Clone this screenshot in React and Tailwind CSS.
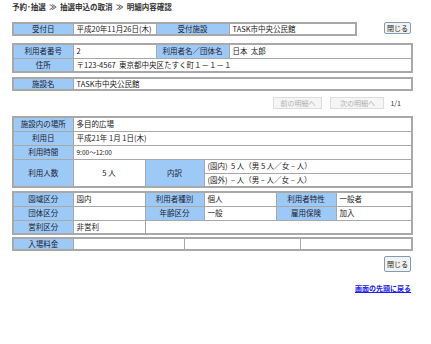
import React from "react";

const L = "bg-[#9cc9f5] text-center text-[#223] border border-[#a8a8a8] px-[2px] whitespace-nowrap overflow-hidden";
const V = "bg-white border border-[#a8a8a8] px-[3px] whitespace-nowrap overflow-hidden";
const TBL = "border-collapse table-fixed border-2 border-[#a8a8a8]";
const R = "h-[14px]";
const R1 = "h-[12px]";

function Cols({ widths }) {
  return (
    <colgroup>
      {widths.map((w, i) => (
        <col key={i} style={{ width: w }} />
      ))}
    </colgroup>
  );
}

export default function App() {
  return (
    <div
      className="w-[431px] h-[344px] bg-white text-[#222] text-[7.5px] leading-[10px] pl-[12px] flex flex-col"
      style={{ fontFamily: '"Noto Sans CJK JP", "Noto Sans", sans-serif' }}
    >
      <div className="mt-[2px] h-[10px] font-bold text-[7.5px] text-[#333]">
        予約･抽選 &nbsp;≫&nbsp; 抽選申込の取消 &nbsp;≫&nbsp; 明細内容確認
      </div>

      <div className="mt-[10px] flex items-start w-[399px]">
        <table className={TBL + " w-[343px]"}>
          <Cols widths={[60, 83, 73, 127]} />
          <tbody>
            <tr className={R1}>
              <td className={L}>受付日</td>
              <td className={V}>平成20年11月26日(木)</td>
              <td className={L}>受付施設</td>
              <td className={V}>TASK市中央公民館</td>
            </tr>
          </tbody>
        </table>
        <button className="ml-auto h-[12px] w-[27px] text-[7px] leading-[10px] border border-[#7f9db9] rounded-[2px] bg-[#f2f2f0] text-[#222]">
          閉じる
        </button>
      </div>

      <table className={TBL + " w-[399px] mt-[7px]"}>
        <Cols widths={[60, 83, 73, 183]} />
        <tbody>
          <tr className={R}>
            <td className={L}>利用者番号</td>
            <td className={V}>2</td>
            <td className={L}>利用者名／団体名</td>
            <td className={V}>日本&nbsp;&nbsp;太郎</td>
          </tr>
          <tr className={R}>
            <td className={L}>住所</td>
            <td className={V} colSpan={3}>〒123-4567&nbsp;&nbsp;東京都中央区たすく町１－１－１</td>
          </tr>
        </tbody>
      </table>

      <table className={TBL + " w-[399px] mt-[4px]"}>
        <Cols widths={[60, 339]} />
        <tbody>
          <tr className={R1}>
            <td className={L}>施設名</td>
            <td className={V}>TASK市中央公民館</td>
          </tr>
        </tbody>
      </table>

      <div className="mt-[6px] flex items-center w-[399px] h-[12px]">
        <button disabled className="ml-auto h-[12px] w-[49px] text-[7px] leading-[10px] border border-[#ddd] bg-[#f5f5f5] text-[#b0b0b0]">
          前の明細へ
        </button>
        <button disabled className="ml-[8px] h-[12px] w-[54px] text-[7px] leading-[10px] border border-[#ddd] bg-[#f5f5f5] text-[#b0b0b0]">
          次の明細へ
        </button>
        <span className="ml-[6px] mr-[10px] text-[7px] text-[#333]">1/1</span>
      </div>

      <table className={TBL + " w-[399px] mt-[7px]"}>
        <Cols widths={[60, 72, 59, 208]} />
        <tbody>
          <tr className={R}>
            <td className={L}>施設内の場所</td>
            <td className={V} colSpan={3}>多目的広場</td>
          </tr>
          <tr className={R}>
            <td className={L}>利用日</td>
            <td className={V} colSpan={3}>平成21年 1月 1日(木)</td>
          </tr>
          <tr className={R}>
            <td className={L}>利用時間</td>
            <td className={V} colSpan={3}><span className="text-[6.5px]">9:00～12:00</span></td>
          </tr>
          <tr className={R}>
            <td className={L} rowSpan={2}>利用人数</td>
            <td className={V + " text-center"} rowSpan={2}>5 人</td>
            <td className={L} rowSpan={2}>内訳</td>
            <td className={V}>(園内)&nbsp;&nbsp;5 人（男 5 人／女 – 人）</td>
          </tr>
          <tr className={R}>
            <td className={V}>(園外)&nbsp;&nbsp;– 人（男 – 人／女 – 人）</td>
          </tr>
        </tbody>
      </table>

      <table className={TBL + " w-[399px] mt-[3px]"}>
        <Cols widths={[60, 72, 59, 72, 60, 76]} />
        <tbody>
          <tr className={R}>
            <td className={L}>園域区分</td>
            <td className={V}>園内</td>
            <td className={L}>利用者種別</td>
            <td className={V}>個人</td>
            <td className={L}>利用者特性</td>
            <td className={V}>一般者</td>
          </tr>
          <tr className={R}>
            <td className={L}>団体区分</td>
            <td className={V}></td>
            <td className={L}>年齢区分</td>
            <td className={V}>一般</td>
            <td className={L}>雇用保険</td>
            <td className={V}>加入</td>
          </tr>
          <tr className={R}>
            <td className={L}>営利区分</td>
            <td className={V}>非営利</td>
            <td className={V} colSpan={4}></td>
          </tr>
        </tbody>
      </table>

      <table className={TBL + " w-[399px] mt-[2px]"}>
        <Cols widths={[60, 111, 116, 112]} />
        <tbody>
          <tr className={R1}>
            <td className={L}>入場料金</td>
            <td className={V}></td>
            <td className={V}></td>
            <td className={V}></td>
          </tr>
        </tbody>
      </table>

      <div className="w-[399px] flex mt-[5px]">
        <button className="ml-auto h-[16px] w-[27px] text-[7px] leading-[10px] border border-[#7f9db9] rounded-[2px] bg-[#f2f2f0] text-[#222]">
          閉じる
        </button>
      </div>

      <div className="w-[399px] flex mt-[12px]">
        <a href="#" className="ml-auto text-[7px] leading-[8px] text-[#2020ee] underline font-bold">
          画面の先頭に戻る
        </a>
      </div>
    </div>
  );
}
